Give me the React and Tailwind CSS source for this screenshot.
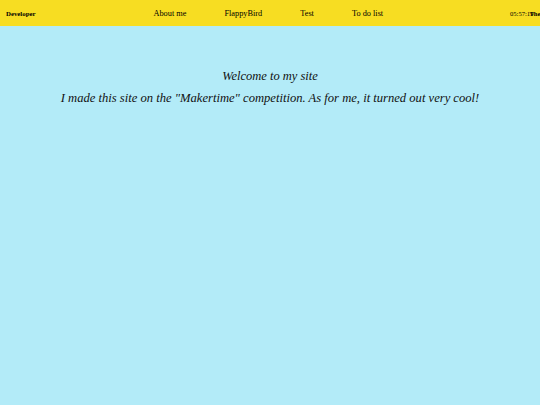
export default function App() {
  return (
    <div className="min-h-[405px] w-[540px] overflow-hidden bg-[#b3ebf8] font-[family-name:'Liberation_Serif','Times_New_Roman',serif] text-black">
      <header className="flex h-[26px] items-center bg-[#f7dd22] pl-[6px] pt-[2px]">
        <span className="text-[6.8px] font-bold">Developer</span>
        <nav className="ml-[118px] flex gap-[38px] text-[8.3px]">
          <a href="#">About me</a>
          <a href="#">FlappyBird</a>
          <a href="#">Test</a>
          <a href="#">To do list</a>
        </nav>
        <div className="ml-auto flex w-[30px] shrink-0 items-center whitespace-nowrap text-[6.6px] -mt-[1px]">
          <span>05:57:19</span>
          <span className="-ml-[4px] font-bold">Theme</span>
        </div>
      </header>
      <main className="flex flex-col items-center pt-[41px] italic text-[#111]">
        <h1 className="text-[12.5px] leading-[18px]">Welcome to my site</h1>
        <p className="mt-[4px] text-[12.6px] leading-[18px]">
          I made this site on the "Makertime" competition. As for me, it turned out very cool!
        </p>
      </main>
    </div>
  );
}
